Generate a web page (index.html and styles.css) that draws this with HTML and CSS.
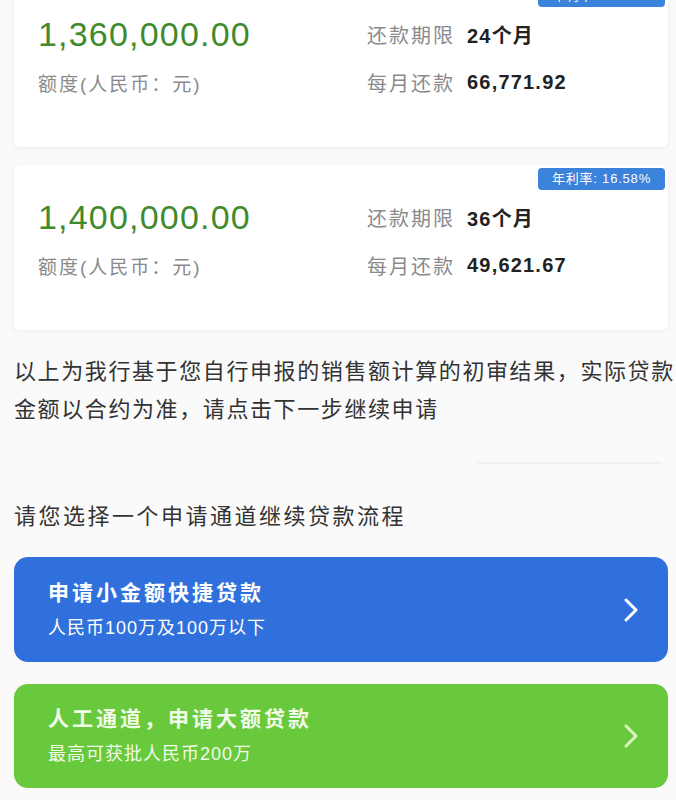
FILE: index.html
```html
<!DOCTYPE html>
<html lang="zh-CN">
<head>
    <meta charset="UTF-8">
    <meta name="viewport" content="width=device-width, initial-scale=1.0">
    <title>贷款申请</title>
    <link rel="stylesheet" href="styles.css">
</head>
<body>
    <main class="page">
        <section class="offers">
            <div class="offer">
                <span class="rate">年利率: 14.90%</span>
                <div class="amount">1,360,000.00</div>
                <div class="term"><span class="key">还款期限</span><span class="val">24个月</span></div>
                <div class="unit">额度(人民币：元)</div>
                <div class="term"><span class="key">每月还款</span><span class="val">66,771.92</span></div>
            </div>
            <div class="offer">
                <span class="rate">年利率: 16.58%</span>
                <div class="amount">1,400,000.00</div>
                <div class="term"><span class="key">还款期限</span><span class="val">36个月</span></div>
                <div class="unit">额度(人民币：元)</div>
                <div class="term"><span class="key">每月还款</span><span class="val">49,621.67</span></div>
            </div>
        </section>

        <p class="note">以上为我行基于您自行申报的销售额计算的初审结果，实际贷款金额以合约为准，请点击下一步继续申请</p>
        <div class="divider"></div>

        <h2 class="choose">请您选择一个申请通道继续贷款流程</h2>

        <a class="channel blue" href="#">
            <div class="channel-text">
                <div class="channel-title">申请小金额快捷贷款</div>
                <div class="channel-sub">人民币100万及100万以下</div>
            </div>
            <svg class="chevron" width="16" height="26" viewBox="0 0 16 26">
                <polyline points="3,3 13,13 3,23" fill="none" stroke="currentColor" stroke-width="3" stroke-linecap="round" stroke-linejoin="round"/>
            </svg>
        </a>

        <a class="channel green" href="#">
            <div class="channel-text">
                <div class="channel-title">人工通道，申请大额贷款</div>
                <div class="channel-sub">最高可获批人民币200万</div>
            </div>
            <svg class="chevron" width="16" height="26" viewBox="0 0 16 26">
                <polyline points="3,3 13,13 3,23" fill="none" stroke="currentColor" stroke-width="3" stroke-linecap="round" stroke-linejoin="round"/>
            </svg>
        </a>
    </main>
</body>
</html>
```

FILE: styles.css
```css
body {
    margin: 0;
    background-color: #fafafa;
    font-family: "Liberation Sans", "Noto Sans CJK SC", sans-serif;
    color: #333;
}

.page {
    padding: 0 8px 0 14px;
}

.offers {
    display: flex;
    flex-direction: column;
    gap: 18px;
    margin-top: -18px;
}

.offer {
    position: relative;
    display: grid;
    grid-template-columns: 329px 1fr;
    grid-template-rows: 36px 36px;
    row-gap: 12px;
    align-items: center;
    padding: 34px 0 47px 24px;
    background-color: #fff;
    border-radius: 6px;
    box-shadow: 0 1px 6px rgba(0, 0, 0, 0.06);
}

.rate {
    position: absolute;
    top: 3px;
    right: 3px;
    padding: 0 14px;
    height: 22px;
    line-height: 22px;
    font-size: 13px;
    color: #fff;
    background-color: #3b82db;
    border-radius: 4px;
    letter-spacing: 0.8px;
}

.amount {
    font-size: 34px;
    letter-spacing: 1.2px;
    color: #3f8a2c;
}

.unit {
    font-size: 19px;
    letter-spacing: 2px;
    color: #8a8a8a;
}

.term {
    display: flex;
    align-items: center;
    font-size: 20px;
}

.term .key {
    color: #8a8a8a;
    letter-spacing: 2px;
    margin-right: 12px;
}

.term .val {
    color: #222;
    font-weight: bold;
    letter-spacing: 1.2px;
}

.note {
    margin: 23px -8px 0 0;
    font-size: 22px;
    line-height: 38px;
    letter-spacing: 1.6px;
    color: #333;
}

.divider {
    width: 184px;
    height: 2px;
    margin: 33px 6px 0 auto;
    background-color: #f0f0f0;
}

.choose {
    margin: 34px 0 21px;
    font-size: 22px;
    font-weight: normal;
    line-height: 38px;
    letter-spacing: 2.5px;
    color: #333;
}

.channel {
    display: flex;
    align-items: center;
    justify-content: space-between;
    padding: 20px 29px 20px 34px;
    margin-bottom: 22px;
    border-radius: 14px;
    text-decoration: none;
    color: #fff;
}

.channel.blue {
    height: 65px;
    background-color: #3070dc;
}

.channel.green {
    height: 64px;
    background-color: #67c93b;
    color: #f2fbe8;
}

.channel-title {
    font-size: 21px;
    font-weight: bold;
    line-height: 30px;
    letter-spacing: 3px;
}

.channel-sub {
    margin-top: 6px;
    font-size: 18px;
    line-height: 28px;
    letter-spacing: 1px;
}

.green .chevron {
    color: #dcf3c6;
}
```
